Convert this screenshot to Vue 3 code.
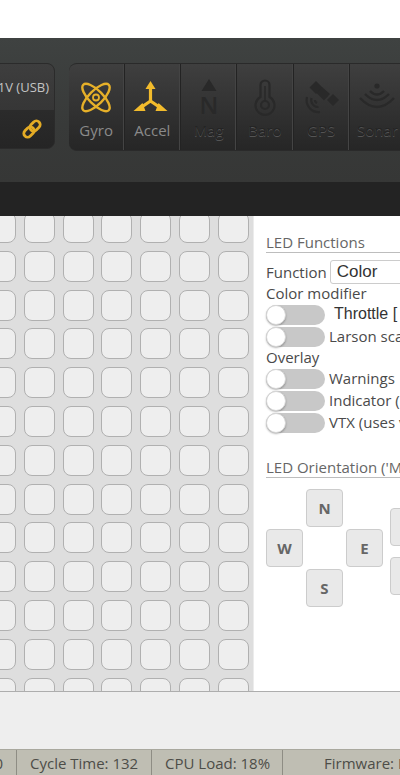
<template>
  <div class="page">
    <div class="top-gap" />
    <header class="header">
      <div class="bar">
        <div class="power">
          <div class="power-top"><span class="power-text">1V (USB)</span></div>
          <div class="power-bottom">
            <svg class="link" width="22" height="22" viewBox="0 0 22 22" fill="none">
              <g transform="rotate(-45 11 11)" stroke="#e3ab25" stroke-width="2.800">
                <rect x="1" y="7.200" width="11.500" height="7.600" rx="3.800" />
                <rect x="9.500" y="7.200" width="11.500" height="7.600" rx="3.800" />
              </g>
            </svg>
          </div>
        </div>
        <div class="sensors">
          <div v-for="s in sensors" :key="s.name" class="sensor" :class="{ on: s.on }">
            <svg class="sensor-icon" width="38" height="38" viewBox="0 0 38 38" fill="none">
              <g v-if="s.name === 'Gyro'" stroke="#e6b029" stroke-width="2.400">
                <ellipse cx="19" cy="18.500" rx="18" ry="7" transform="rotate(45 19 18.500)" />
                <ellipse cx="19" cy="18.500" rx="18" ry="7" transform="rotate(-45 19 18.500)" />
                <circle cx="19" cy="18.500" r="3" stroke-width="1.800" />
              </g>
              <g v-else-if="s.name === 'Accel'" transform="translate(-1.500 0)">
                <path d="M19 9v13l-8 5.500M19 22l8 5.500" stroke="#f2bb2c" stroke-width="3.200" />
                <path d="M19 2l5 8H14zM2 32l9-8 3 8zM36 32l-9-8-3 8z" fill="#f2bb2c" />
              </g>
              <g v-else-if="s.name === 'Mag'" fill="#292929">
                <path d="M19 0l7.500 12h-15z" />
                <text x="19" y="35" text-anchor="middle" class="mag-n">N</text>
              </g>
              <g v-else-if="s.name === 'Baro'" stroke="#292929" stroke-width="2.200">
                <path d="M14.500 18V6a4.500 4.500 0 0 1 9 0v12a9.500 9.500 0 1 1-9 0z" />
                <circle cx="19" cy="26" r="4" />
                <path d="M19 7v15" stroke-width="1.500" />
              </g>
              <g v-else-if="s.name === 'GPS'">
                <g fill="#292929">
                  <path d="M14 2l6.500 6.500-6.500 6.500-6.500-6.500z" />
                  <path d="M31 15l6 6-6 6-6-6z" />
                  <path d="M20 8l8 7-6 6.500-7.500-7.500z" />
                </g>
                <g stroke="#292929" stroke-width="2.200">
                  <path d="M5 18a12 12 0 0 0 13 15" />
                  <path d="M9.500 19a7 7 0 0 0 7 9" />
                  <path d="M13 21a3 3 0 0 0 2 3" />
                </g>
              </g>
              <g v-else stroke="#292929" stroke-width="2.400">
                <circle cx="19" cy="7" r="2.600" fill="#292929" stroke="none" />
                <path d="M12 12q7 7 14 0" />
                <path d="M7 15q12 12 24 0" />
                <path d="M2 19q17 18 34 0" />
              </g>
            </svg>
            <span class="sensor-name">{{ s.name }}</span>
          </div>
        </div>
      </div>
    </header>
    <div class="strip" />

    <main class="main">
      <section class="led-panel">
        <div class="led-grid">
          <div v-for="n in 91" :key="n" class="led" />
        </div>
      </section>
      <aside class="side">
        <div class="heading">LED Functions</div>
        <div class="func-row">
          <span>Function</span>
          <div class="select">Color</div>
        </div>
        <div class="label">Color modifier</div>
        <div v-for="t in modifiers" :key="t.text" class="toggle-row">
          <span class="toggle"><span class="knob" /></span>
          <span class="toggle-text" :class="t.cls">{{ t.text }}</span>
        </div>
        <div class="label">Overlay</div>
        <div v-for="t in overlays" :key="t" class="toggle-row">
          <span class="toggle"><span class="knob" /></span>
          <span class="toggle-text">{{ t }}</span>
        </div>
        <div class="heading second">LED Orientation ('Mode' only)</div>
        <div class="dirs">
          <div class="compass">
            <button class="dir n">N</button>
            <button class="dir w">W</button>
            <button class="dir e">E</button>
            <button class="dir s">S</button>
          </div>
          <div class="updown">
            <button class="dir">U</button>
            <button class="dir">D</button>
          </div>
        </div>
      </aside>
    </main>

    <div class="toolbar" />
    <footer class="status">
      <span class="cell first">0</span>
      <span class="cell cycle">Cycle Time: 132</span>
      <span class="cell cpu">CPU Load: 18%</span>
      <span class="cell firmware">Firmware: Betaflight</span>
    </footer>
  </div>
</template>

<script setup>
const sensors = [
  { name: "Gyro", on: true },
  { name: "Accel", on: true },
  { name: "Mag", on: false },
  { name: "Baro", on: false },
  { name: "GPS", on: false },
  { name: "Sonar", on: false },
];

const modifiers = [
  { text: "Throttle [ Y ]", cls: "arial" },
  { text: "Larson scanner", cls: "" },
];

const overlays = ["Warnings", "Indicator (uses", "VTX (uses vtx frequency)"];
</script>

<style>
html,
body {
  margin: 0;
  background: #fff;
}
</style>

<style scoped>
.page {
  display: flex;
  flex-direction: column;
  width: 400px;
  height: 775px;
  overflow: hidden;
  font-family: "Open Sans", sans-serif;
  font-size: 15px;
  color: #4a4a4a;
  background: #fff;
}

.top-gap {
  flex: 0 0 38px;
}

.header {
  flex: 0 0 144px;
  box-sizing: border-box;
  padding-top: 25px;
  background: linear-gradient(#3f4241, #383a39 60%, #363736);
}

.bar {
  display: flex;
  gap: 13.500px;
  margin-left: -60px;
}

.power {
  flex: 0 0 115px;
  height: 86px;
  overflow: hidden;
  border: 1px solid #2b2b2b;
  border-radius: 8px;
  box-sizing: border-box;
  background: #2a2a2a;
}

.power-top {
  display: flex;
  align-items: center;
  justify-content: flex-end;
  height: 46px;
  padding-right: 5px;
  box-sizing: border-box;
  background: linear-gradient(#3e3e3e, #363636);
}

.power-text {
  font-size: 13px;
  color: #c4c4c4;
}

.power-bottom {
  display: flex;
  align-items: center;
  justify-content: flex-end;
  height: 38px;
  padding-right: 11px;
  background: linear-gradient(#2b2b2b, #252525);
}

.sensors {
  display: flex;
  flex: 0 0 auto;
  height: 88px;
  overflow: hidden;
  border-radius: 8px 0 0 8px;
  border-top: 1px solid #2a2a2a;
  border-bottom: 1px solid #2a2a2a;
  box-sizing: border-box;
  background: linear-gradient(#3f3f3f, #262626);
}

.sensor {
  display: flex;
  flex: 0 0 56.250px;
  flex-direction: column;
  align-items: center;
  box-sizing: border-box;
  padding-top: 15px;
  border-right: 1px solid #232323;
  box-shadow: inset -1px 0 0 #444;
}

.sensor-icon {
  flex: 0 0 38px;
  width: 38px;
  height: 38px;
  margin-bottom: 2px;
  overflow: visible;
}

.sensor-name {
  font-size: 15px;
  line-height: 22px;
  color: #242424;
  text-shadow: 0 1px 0 #555;
  white-space: nowrap;
}

.sensor.on .sensor-name {
  color: #8a8a8a;
  text-shadow: none;
}

.mag-n {
  font-family: "Open Sans", sans-serif;
  font-size: 24px;
  font-weight: 600;
}

.strip {
  flex: 0 0 34px;
  background: #232323;
}

.main {
  display: flex;
  flex: 0 0 476px;
  overflow: hidden;
  border-bottom: 1px solid #adadad;
  box-sizing: border-box;
}

.led-panel {
  flex: 0 0 253px;
  overflow: hidden;
  background: #dedede;
}

.led-grid {
  display: grid;
  grid-template-columns: repeat(7, 31px);
  gap: 7.800px;
  margin: -4px 0 0 -15px;
}

.led {
  height: 31px;
  box-sizing: border-box;
  border: 1px solid #b0b0b0;
  border-radius: 8px;
  background: #eeeeee;
}

.side {
  flex: 1 1 0;
  min-width: 0;
  box-sizing: border-box;
  padding: 18px 0 0 12px;
  overflow: hidden;
  white-space: pre;
  border-left: 1px solid #ececec;
}

.heading {
  height: 18px;
  margin-right: -20px;
  line-height: 16px;
  color: #666;
  border-bottom: 1px solid #bdbdbd;
}

.heading.second {
  margin-top: 25px;
}

.func-row {
  display: flex;
  align-items: center;
  gap: 3px;
  margin-top: 7px;
  height: 24px;
}

.select {
  flex: 0 0 120px;
  box-sizing: border-box;
  height: 24px;
  padding-left: 6px;
  font-family: "Liberation Sans", Arial, sans-serif;
  font-size: 17px;
  line-height: 22px;
  color: #333;
  border: 1px solid #ccc;
  border-radius: 3px;
}

.label {
  height: 20px;
  line-height: 18px;
}

.toggle-row {
  display: flex;
  align-items: center;
  gap: 4px;
  height: 22px;
}

.toggle-text {
  margin-bottom: 2px;
}

.toggle {
  position: relative;
  flex: 0 0 59px;
  height: 20px;
  background: #c8c8c8;
  border-radius: 10px;
}

.knob {
  position: absolute;
  top: 0;
  left: 0;
  width: 20px;
  height: 20px;
  box-sizing: border-box;
  background: #fff;
  border: 1px solid #d6d6d6;
  border-radius: 50%;
  box-shadow: 0 1px 2px rgba(0, 0, 0, 0.3);
}

.arial {
  margin-left: 5px;
  font-family: "Liberation Sans", Arial, sans-serif;
  font-size: 16px;
  color: #333;
}

.dirs {
  display: flex;
  gap: 7px;
  margin-top: 11px;
}

.compass {
  display: grid;
  grid-template-columns: repeat(3, 37px);
  grid-template-rows: repeat(3, 38px);
  gap: 2px 3px;
}

.dir {
  box-sizing: border-box;
  width: 37px;
  height: 38px;
  padding: 0;
  font-family: "Open Sans", sans-serif;
  font-size: 15px;
  font-weight: 700;
  color: #666;
  background: #e9e9e9;
  border: 1px solid #ccc;
  border-radius: 4px;
}

.n {
  grid-column: 2;
  grid-row: 1;
}

.w {
  grid-column: 1;
  grid-row: 2;
}

.e {
  grid-column: 3;
  grid-row: 2;
}

.s {
  grid-column: 2;
  grid-row: 3;
}

.updown {
  display: flex;
  flex-direction: column;
  gap: 11px;
  padding-top: 19px;
}

.toolbar {
  flex: 0 0 57px;
  background: #eeeeee;
}

.status {
  display: flex;
  flex: 0 0 26px;
  box-sizing: border-box;
  align-items: center;
  height: 26px;
  white-space: nowrap;
  background: #bfbeb3;
  border-top: 1px solid #a9a89e;
}

.cell {
  display: flex;
  align-items: center;
  box-sizing: border-box;
  height: 100%;
  font-size: 15px;
  color: #4d4d48;
  border-right: 1px solid #8e8d84;
}

.first {
  flex: 0 0 17px;
  min-width: 0;
  justify-content: flex-end;
  padding-right: 13px;
}

.cycle {
  flex: 0 0 135px;
  padding-left: 13px;
}

.cpu {
  flex: 0 0 131px;
  padding-left: 13px;
}

.firmware {
  padding-left: 41px;
  border-right: none;
}
</style>
